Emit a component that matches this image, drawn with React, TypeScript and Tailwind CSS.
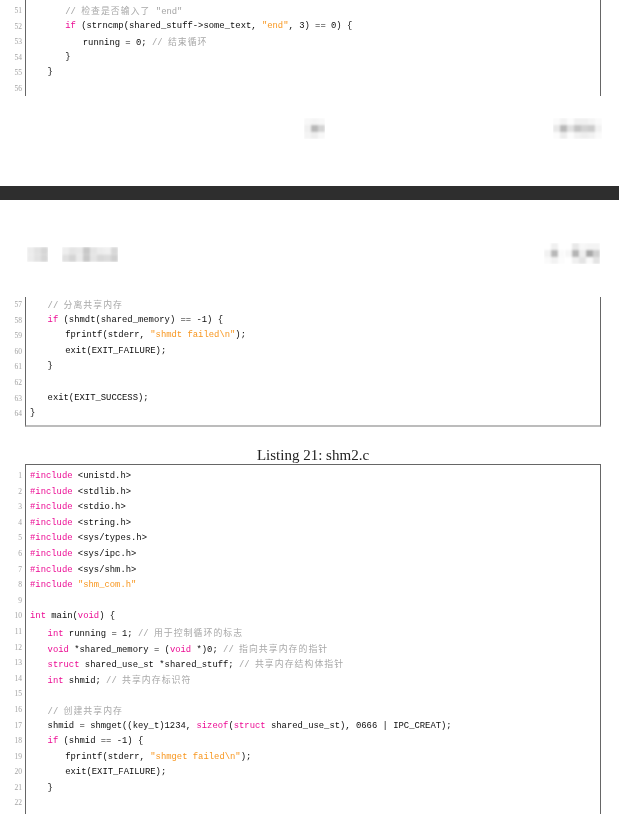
import React from "react";

type Tok = [string, string];
type Line = { n: number; i?: number; t?: Tok[] };

const cls: Record<string, string> = {
  t: "text-[#0c0c0c]",
  k: "text-[#ec0c94]",
  s: "text-[#f8961e]",
  c: "text-[#a4a4a4]",
  z: "text-[#a8a8a8] tracking-[1.05px] font-['Noto_Sans_CJK_SC',sans-serif]",
};

const sec1: Line[] = [
  { n: 51, i: 2, t: [["c", "// "], ["z", "检查是否输入了"], ["c", " \"end\""]] },
  { n: 52, i: 2, t: [["k", "if"], ["t", " (strncmp(shared_stuff->some_text, "], ["s", "\"end\""], ["t", ", 3) == 0) {"]] },
  { n: 53, i: 3, t: [["t", "running = 0; "], ["c", "// "], ["z", "结束循环"]] },
  { n: 54, i: 2, t: [["t", "}"]] },
  { n: 55, i: 1, t: [["t", "}"]] },
  { n: 56 },
];

const sec2: Line[] = [
  { n: 57, i: 1, t: [["c", "// "], ["z", "分离共享内存"]] },
  { n: 58, i: 1, t: [["k", "if"], ["t", " (shmdt(shared_memory) == -1) {"]] },
  { n: 59, i: 2, t: [["t", "fprintf(stderr, "], ["s", "\"shmdt failed\\n\""], ["t", ");"]] },
  { n: 60, i: 2, t: [["t", "exit(EXIT_FAILURE);"]] },
  { n: 61, i: 1, t: [["t", "}"]] },
  { n: 62 },
  { n: 63, i: 1, t: [["t", "exit(EXIT_SUCCESS);"]] },
  { n: 64, t: [["t", "}"]] },
];

const inc = (n: number, h: string): Line => ({ n, t: [["k", "#include"], ["t", " " + h]] });

const sec3: Line[] = [
  inc(1, "<unistd.h>"),
  inc(2, "<stdlib.h>"),
  inc(3, "<stdio.h>"),
  inc(4, "<string.h>"),
  inc(5, "<sys/types.h>"),
  inc(6, "<sys/ipc.h>"),
  inc(7, "<sys/shm.h>"),
  { n: 8, t: [["k", "#include"], ["t", " "], ["s", "\"shm_com.h\""]] },
  { n: 9 },
  { n: 10, t: [["k", "int"], ["t", " main("], ["k", "void"], ["t", ") {"]] },
  { n: 11, i: 1, t: [["k", "int"], ["t", " running = 1; "], ["c", "// "], ["z", "用于控制循环的标志"]] },
  { n: 12, i: 1, t: [["k", "void"], ["t", " *shared_memory = ("], ["k", "void"], ["t", " *)0; "], ["c", "// "], ["z", "指向共享内存的指针"]] },
  { n: 13, i: 1, t: [["k", "struct"], ["t", " shared_use_st *shared_stuff; "], ["c", "// "], ["z", "共享内存结构体指针"]] },
  { n: 14, i: 1, t: [["k", "int"], ["t", " shmid; "], ["c", "// "], ["z", "共享内存标识符"]] },
  { n: 15 },
  { n: 16, i: 1, t: [["c", "// "], ["z", "创建共享内存"]] },
  { n: 17, i: 1, t: [["t", "shmid = shmget((key_t)1234, "], ["k", "sizeof"], ["t", "("], ["k", "struct"], ["t", " shared_use_st), 0666 | IPC_CREAT);"]] },
  { n: 18, i: 1, t: [["k", "if"], ["t", " (shmid == -1) {"]] },
  { n: 19, i: 2, t: [["t", "fprintf(stderr, "], ["s", "\"shmget failed\\n\""], ["t", ");"]] },
  { n: 20, i: 2, t: [["t", "exit(EXIT_FAILURE);"]] },
  { n: 21, i: 1, t: [["t", "}"]] },
  { n: 22 },
];

function Listing({ lines, box, pad }: { lines: Line[]; box: string; pad: string }) {
  return (
    <div className="flex">
      <div className={`w-[25px] shrink-0 ${pad} text-right pr-[3px] text-[7.5px] leading-[15.6px] text-[#a4a4a4] font-['Liberation_Serif',serif] blur-[0.3px]`}>
        {lines.map((l) => (
          <div key={l.n} className="h-[15.6px]">{l.n}</div>
        ))}
      </div>
      <div className={`w-[576px] shrink-0 border-l border-r border-[#666666] overflow-hidden ${pad} ${box}`}>
        <div className="blur-[0.3px] font-['Liberation_Mono',monospace] text-[8.87px] leading-[15.6px] whitespace-pre pl-[4px]">
          {lines.map((l) => (
            <div key={l.n} className="h-[15.6px]" style={{ paddingLeft: (l.i ?? 0) * 17.6 }}>
              {l.t?.map((tok, j) => (
                <span key={j} className={cls[tok[0]]}>{tok[1]}</span>
              ))}
            </div>
          ))}
        </div>
      </div>
    </div>
  );
}

function Mosaic({ rows, cell = 7, cellH = 7, className = "" }: { rows: string[][]; cell?: number; cellH?: number; className?: string }) {
  const w = rows[0].length * cell;
  const h = rows.length * cellH;
  const id = React.useId();
  return (
    <svg width={w} height={h} viewBox={`0 0 ${w} ${h}`} className={`shrink-0 ${className}`}>
      <filter id={id} x="-10%" y="-10%" width="120%" height="120%">
        <feGaussianBlur stdDeviation="0.9" />
      </filter>
      <g filter={`url(#${id})`}>
        {rows.flatMap((r, y) =>
          r.map((c, x) => (
            <rect key={`${x}-${y}`} x={x * cell} y={y * cellH} width={cell} height={cellH} fill={`#${c}${c}${c}`} />
          ))
        )}
      </g>
    </svg>
  );
}

export default function App() {
  return (
    <div className="h-[814px] w-[619px] overflow-hidden bg-white">
      <div className="h-[96px] overflow-hidden">
        <Listing lines={sec1} box="h-[96px]" pad="pt-[3px]" />
      </div>

      <div className="flex h-[90px] items-start pt-[22px]">
        <Mosaic
          className="ml-[304px]"
          rows={[
            ["f8", "f4", "f8"],
            ["f0", "b8", "d4"],
            ["f4", "ee", "f8"],
          ]}
        />
        <Mosaic
          className="ml-[228px]"
          rows={[
            ["fb", "f2", "fc", "f0", "f0", "f4", "fa"],
            ["e8", "b8", "e0", "c4", "d2", "cc", "f2"],
            ["fc", "ec", "fc", "f2", "ee", "f2", "fa"],
          ]}
        />
      </div>

      <div className="h-[14px] bg-[#2e2e2e]" />

      <div className="flex h-[97px] items-start pt-[43px]">
        <Mosaic
          className="ml-[27px] mt-[4px]"
          cellH={7.5}
          rows={[
            ["ec", "e2", "d6"],
            ["ec", "e2", "d6"],
          ]}
        />
        <Mosaic
          className="ml-[14px] mt-[4px]"
          cellH={7.5}
          rows={[
            ["ee", "e4", "e8", "c8", "e4", "ec", "f0", "d8"],
            ["e0", "d4", "ea", "c8", "e4", "d8", "dc", "cf"],
          ]}
        />
        <Mosaic
          className="ml-[426px]"
          rows={[
            ["ff", "f0", "ff"],
            ["f2", "b8", "fa"],
            ["fa", "f2", "fc"],
          ]}
        />
        <Mosaic
          rows={[
            ["ff", "e8", "f8", "f4", "f4"],
            ["f6", "b4", "ee", "a8", "d0"],
            ["ff", "f0", "e4", "fa", "e4"],
          ]}
        />
      </div>

      <Listing lines={sec2} box="h-[130px] border-b-2 border-b-[#bcbcbc]" pad="pt-0" />

      <div className="h-[37px] w-[576px] ml-[25px] pt-[19px] text-center font-['Liberation_Serif',serif] text-[15px] leading-[18px] text-[#222222] blur-[0.2px]">
        Listing 21: shm2.c
      </div>

      <div className="overflow-hidden">
        <Listing lines={sec3} box="border-t border-t-[#666666] h-[360px]" pad="pt-[4px]" />
      </div>
    </div>
  );
}
